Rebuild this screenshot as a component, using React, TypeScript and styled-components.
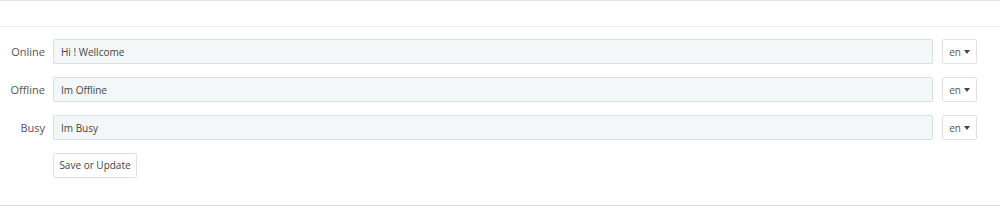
import React from 'react';
import styled, { createGlobalStyle } from 'styled-components';

const GlobalStyle = createGlobalStyle`
  html, body {
    margin: 0;
    padding: 0;
    background: #fff;
    font-family: "Open Sans", "Liberation Sans", sans-serif;
  }
`;

const Panel = styled.div`
  width: 1000px;
  height: 206px;
  border-top: 1px solid #dfe3e5;
  border-bottom: 1px solid #dcdcdc;
  box-sizing: border-box;
  background: #fff;
`;

const Heading = styled.div`
  height: 25px;
  border-bottom: 1px solid #eceeef;
`;

const Body = styled.div`
  padding: 12px 23px 0 0;
  display: flex;
  flex-direction: column;
  gap: 13px;
`;

const Row = styled.div`
  display: flex;
  align-items: center;
  height: 25px;
`;

const Label = styled.label`
  width: 45px;
  flex: none;
  text-align: right;
  font-size: 11px;
  color: #555;
  margin-right: 8px;
`;

const Input = styled.input`
  flex: 1;
  height: 25px;
  box-sizing: border-box;
  border: 1px solid #d8e0e3;
  border-radius: 2px;
  background: #f3f7f8;
  padding: 0 7px;
  font-family: inherit;
  font-size: 10px;
  color: #444;
  outline: none;
`;

const LangButton = styled.button`
  flex: none;
  width: 35px;
  height: 25px;
  margin-left: 9px;
  box-sizing: border-box;
  border: 1px solid #dfe3e5;
  border-radius: 2px;
  background: #fff;
  font-family: inherit;
  font-size: 10px;
  color: #555;
  padding: 0;
  display: flex;
  align-items: center;
  justify-content: center;
  gap: 3px;
`;

const Caret = styled.span`
  width: 0;
  height: 0;
  border-left: 3.5px solid transparent;
  border-right: 3.5px solid transparent;
  border-top: 4px solid #444;
`;

const Actions = styled.div`
  padding-left: 53px;
  margin-top: -1px;
`;

const SaveButton = styled.button`
  height: 25px;
  width: 84px;
  box-sizing: border-box;
  border: 1px solid #dfe3e5;
  border-radius: 2px;
  background: #fff;
  font-family: inherit;
  font-size: 10px;
  color: #444;
  padding: 0;
`;

const rows = [
  { label: 'Online', value: 'Hi ! Wellcome' },
  { label: 'Offline', value: 'Im Offline' },
  { label: 'Busy', value: 'Im Busy' },
];

export default function App() {
  return (
    <>
      <GlobalStyle />
      <Panel>
        <Heading />
        <Body>
          {rows.map((r) => (
            <Row key={r.label}>
              <Label>{r.label}</Label>
              <Input defaultValue={r.value} />
              <LangButton>
                en <Caret />
              </LangButton>
            </Row>
          ))}
          <Actions>
            <SaveButton>Save or Update</SaveButton>
          </Actions>
        </Body>
      </Panel>
    </>
  );
}
